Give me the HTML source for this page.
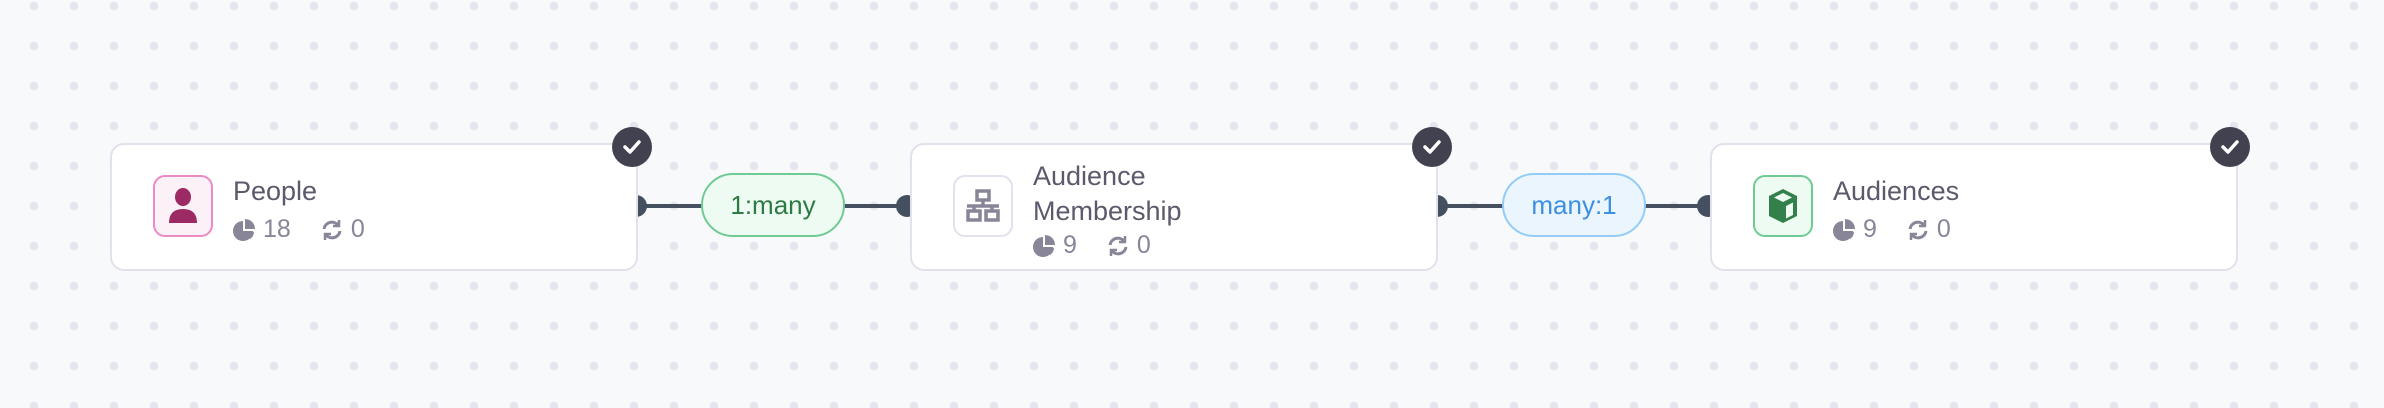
<!DOCTYPE html>
<html><head><style>
html,body{margin:0;padding:0}
body{width:2384px;height:408px;position:relative;overflow:hidden;background:#f8f9fb;
background-image:radial-gradient(circle,#e6e5ef 4px,transparent 4.6px);background-size:40px 40px;background-position:14px -14px;
font-family:"Liberation Sans",sans-serif}
.line{position:absolute;height:4px;background:#44505f;top:204px}
.h{position:absolute;width:22px;height:22px;border-radius:50%;background:#44505f;top:195px}
.card{position:absolute;top:143px;height:124px;background:#fff;border:2px solid #e2e1ec;border-radius:14px;box-sizing:content-box}
.badge{position:absolute;width:40px;height:40px;border-radius:50%;background:#42414f;top:127px;display:flex;align-items:center;justify-content:center}
.ib{position:absolute;top:30px;width:60px;height:62px;border-radius:12px;box-sizing:border-box;display:flex;align-items:center;justify-content:center}
.t{position:absolute;color:#5b596b;font-size:27px;line-height:34px}
.s{position:absolute;color:#878597;font-size:25px;display:flex;align-items:center;gap:8px}
.pill{position:absolute;top:173px;height:60px;width:140px;border-radius:32px;border:2px solid;display:flex;align-items:center;justify-content:center;font-size:26px}
</style></head><body>
<div class="line" style="left:641px;width:270px"></div>
<div class="line" style="left:1438px;width:270px"></div>
<div class="h" style="left:625px"></div>
<div class="h" style="left:896px"></div>
<div class="h" style="left:1426px"></div>
<div class="h" style="left:1697px"></div>

<div class="pill" style="left:701px;background:#edfbf2;border-color:#6fcb93;color:#2e7a45">1:many</div>
<div class="pill" style="left:1502px;background:#eaf5fe;border-color:#93ccf6;color:#3d8fe0">many:1</div>

<!-- Card 1 -->
<div class="card" style="left:110px;width:524px">
 <div class="ib" style="left:41px;background:#fdf1f8;border:2px solid #ec8ac3">
  <svg width="34" height="38" viewBox="0 0 34 38"><ellipse cx="17" cy="10" rx="8" ry="9" fill="#9c2a64"/><path d="M3 36 Q3 22 17 22 Q31 22 31 36 Z" fill="#9c2a64"/></svg>
 </div>
 <div class="t" style="left:121px;top:29px">People</div>
 <div class="s" style="left:121px;top:70px"><svg width="22" height="22" viewBox="0 0 22 22"><path d="M10 2 A10 10 0 1 0 20 12 L10 12 Z" fill="#878597"/><path d="M12 0 A10 10 0 0 1 22 10 L12 10Z" fill="#878597"/><path d="M13 13 L21 13 A9 9 0 0 1 17 20 Z" fill="#878597"/></svg><span>18</span><span style="width:14px"></span><svg width="22" height="22" viewBox="0 0 22 22" fill="none" stroke="#878597" stroke-width="3"><path d="M3 10 A8 8 0 0 1 17 6"/><path d="M19 12 A8 8 0 0 1 5 16"/><path d="M18 1 L18 7 L12 7" stroke-width="2.5"/><path d="M4 21 L4 15 L10 15" stroke-width="2.5"/></svg><span>0</span></div>
</div>
<div class="badge" style="left:612px"><svg width="20" height="16" viewBox="0 0 20 16"><path d="M3 8 L8 13 L17 3" stroke="#fff" stroke-width="3.5" fill="none" stroke-linecap="round" stroke-linejoin="round"/></svg></div>

<!-- Card 2 -->
<div class="card" style="left:910px;width:524px">
 <div class="ib" style="left:41px;background:#fff;border:2px solid #e2e1ec">
  <svg width="36" height="34" viewBox="0 0 36 34" fill="none" stroke="#878597" stroke-width="3.5"><rect x="12" y="2" width="12" height="9"/><path d="M18 11 V16 M2 17 H34 M9 17 V21 M27 17 V21"/><rect x="3" y="22" width="12" height="9"/><rect x="21" y="22" width="12" height="9"/></svg>
 </div>
 <div class="t" style="left:121px;top:14px">Audience</div>
 <div class="t" style="left:121px;top:49px">Membership</div>
 <div class="s" style="left:121px;top:86px"><svg width="22" height="22" viewBox="0 0 22 22"><path d="M10 2 A10 10 0 1 0 20 12 L10 12 Z" fill="#878597"/><path d="M12 0 A10 10 0 0 1 22 10 L12 10Z" fill="#878597"/><path d="M13 13 L21 13 A9 9 0 0 1 17 20 Z" fill="#878597"/></svg><span>9</span><span style="width:14px"></span><svg width="22" height="22" viewBox="0 0 22 22" fill="none" stroke="#878597" stroke-width="3"><path d="M3 10 A8 8 0 0 1 17 6"/><path d="M19 12 A8 8 0 0 1 5 16"/><path d="M18 1 L18 7 L12 7" stroke-width="2.5"/><path d="M4 21 L4 15 L10 15" stroke-width="2.5"/></svg><span>0</span></div>
</div>
<div class="badge" style="left:1412px"><svg width="20" height="16" viewBox="0 0 20 16"><path d="M3 8 L8 13 L17 3" stroke="#fff" stroke-width="3.5" fill="none" stroke-linecap="round" stroke-linejoin="round"/></svg></div>

<!-- Card 3 -->
<div class="card" style="left:1710px;width:524px">
 <div class="ib" style="left:41px;background:#edfbf2;border:2px solid #6fcb93">
  <svg width="30" height="36" viewBox="0 0 30 36"><path d="M15 1 L29 8 L29 28 L15 35 L1 28 L1 8 Z" fill="#33804a"/><path d="M15 5 L24 9.5 L15 14 L6 9.5 Z" fill="#edfbf2"/><path d="M18 18 L25 14.5 L25 27 L18 30.5 Z" fill="#edfbf2"/></svg>
 </div>
 <div class="t" style="left:121px;top:29px">Audiences</div>
 <div class="s" style="left:121px;top:70px"><svg width="22" height="22" viewBox="0 0 22 22"><path d="M10 2 A10 10 0 1 0 20 12 L10 12 Z" fill="#878597"/><path d="M12 0 A10 10 0 0 1 22 10 L12 10Z" fill="#878597"/><path d="M13 13 L21 13 A9 9 0 0 1 17 20 Z" fill="#878597"/></svg><span>9</span><span style="width:14px"></span><svg width="22" height="22" viewBox="0 0 22 22" fill="none" stroke="#878597" stroke-width="3"><path d="M3 10 A8 8 0 0 1 17 6"/><path d="M19 12 A8 8 0 0 1 5 16"/><path d="M18 1 L18 7 L12 7" stroke-width="2.5"/><path d="M4 21 L4 15 L10 15" stroke-width="2.5"/></svg><span>0</span></div>
</div>
<div class="badge" style="left:2210px"><svg width="20" height="16" viewBox="0 0 20 16"><path d="M3 8 L8 13 L17 3" stroke="#fff" stroke-width="3.5" fill="none" stroke-linecap="round" stroke-linejoin="round"/></svg></div>
</body></html>
